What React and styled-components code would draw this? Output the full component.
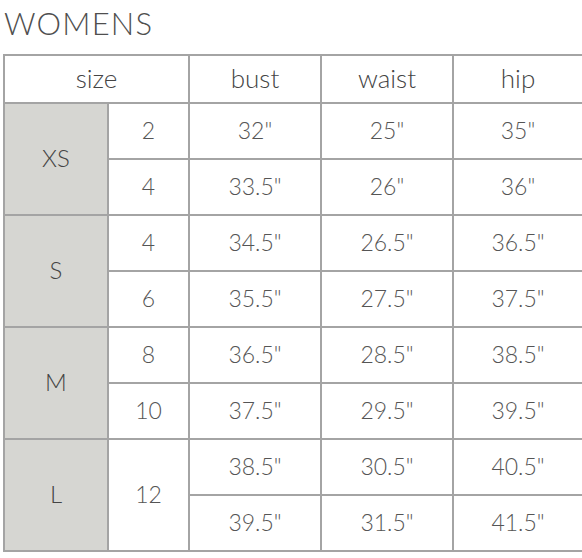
import React from "react";
import styled, { createGlobalStyle } from "styled-components";

const rows = [
  { group: "XS", span: 2, size: "2", bust: '32"', waist: '25"', hip: '35"' },
  { size: "4", bust: '33.5"', waist: '26"', hip: '36"' },
  { group: "S", span: 2, size: "4", bust: '34.5"', waist: '26.5"', hip: '36.5"' },
  { size: "6", bust: '35.5"', waist: '27.5"', hip: '37.5"' },
  { group: "M", span: 2, size: "8", bust: '36.5"', waist: '28.5"', hip: '38.5"' },
  { size: "10", bust: '37.5"', waist: '29.5"', hip: '39.5"' },
  { group: "L", span: 2, size: "12", sizeSpan: 2, bust: '38.5"', waist: '30.5"', hip: '40.5"' },
  { bust: '39.5"', waist: '31.5"', hip: '41.5"' },
];

const App = () => {
  return (
    <>
      <GlobalStyle />
      <Page>
        <Title>WOMENS</Title>
        <SizeTable>
          <colgroup>
            <col style={{ width: 104 }} />
            <col style={{ width: 81 }} />
            <col style={{ width: 132 }} />
            <col style={{ width: 132 }} />
            <col style={{ width: 130 }} />
          </colgroup>
          <thead>
            <HeadRow>
              <HeadCell colSpan={2}>size</HeadCell>
              <HeadCell>bust</HeadCell>
              <HeadCell>waist</HeadCell>
              <HeadCell>hip</HeadCell>
            </HeadRow>
          </thead>
          <tbody>
            {rows.map((row, i) => (
              <BodyRow key={i}>
                {row.group && <GroupCell rowSpan={row.span}>{row.group}</GroupCell>}
                {row.size && <Cell rowSpan={row.sizeSpan || 1}>{row.size}</Cell>}
                <Cell>{row.bust}</Cell>
                <Cell>{row.waist}</Cell>
                <Cell>{row.hip}</Cell>
              </BodyRow>
            ))}
          </tbody>
        </SizeTable>
      </Page>
    </>
  );
};

const GlobalStyle = createGlobalStyle`
  body {
    margin: 0;
    background: #fff;
    font-family: "Lato", "Open Sans", sans-serif;
  }
`;

const Page = styled.div`
  width: 582px;
  height: 558px;
  padding: 5px 0 0 3px;
  box-sizing: border-box;
  overflow: hidden;
`;

const Title = styled.h1`
  margin: 0 0 0 1px;
  font-size: 31px;
  font-weight: 300;
  letter-spacing: 1.2px;
  line-height: 36px;
  color: #4f4f4f;
`;

const SizeTable = styled.table`
  margin-top: 13px;
  width: 579px;
  border-collapse: collapse;
  table-layout: fixed;
  border: 2px solid #a4a4a4;
`;

const HeadRow = styled.tr`
  height: 48px;
`;

const BodyRow = styled.tr`
  height: 56px;
`;

const HeadCell = styled.th`
  border: 2px solid #a4a4a4;
  padding: 0 0 3px;
  font-size: 26px;
  font-weight: 300;
  color: #444;
  text-align: center;
`;

const Cell = styled.td`
  border: 2px solid #a4a4a4;
  padding: 0 0 3px;
  font-size: 23px;
  font-weight: 300;
  color: #555;
  text-align: center;
`;

const GroupCell = styled(Cell)`
  background: #d6d6d2;
  font-size: 24px;
  color: #444;
`;

export default App;
